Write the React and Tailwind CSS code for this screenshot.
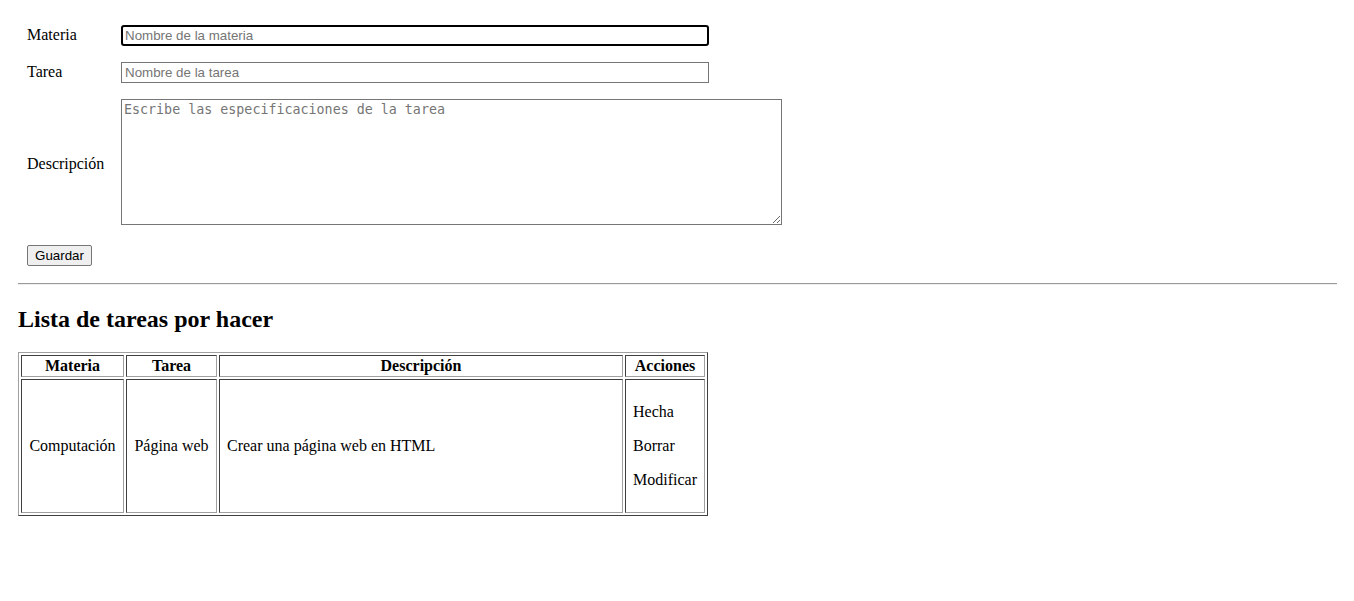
import React from "react";

export default function App() {
  const serif = "font-['Liberation_Serif','Times_New_Roman',serif]";
  const sans = "font-['Liberation_Sans',Arial,sans-serif]";
  return (
    <div className={`min-h-[601px] bg-white text-black ${serif} text-[16px] pl-[18px] pr-[17px]`}>
      <form className="flex flex-col gap-4 pt-[25px] pl-[9px]" onSubmit={(e) => e.preventDefault()}>
        <div className="flex items-center">
          <label className="w-[94px] leading-[18px] pb-[2px]">Materia</label>
          <input
            type="text"
            placeholder="Nombre de la materia"
            className={`w-[588px] h-[21px] border-2 border-black rounded-[3px] px-[2px] ${sans} text-[13.33px] placeholder:text-[#757575] outline-none`}
          />
        </div>
        <div className="flex items-center">
          <label className="w-[94px] leading-[18px] pb-[2px]">Tarea</label>
          <input
            type="text"
            placeholder="Nombre de la tarea"
            className={`w-[588px] h-[21px] border border-[#767676] px-[3px] ${sans} text-[13.33px] placeholder:text-[#757575] outline-none`}
          />
        </div>
        <div className="flex items-center">
          <label className="w-[94px] leading-[18px] pt-[4px]">Descripción</label>
          <textarea
            placeholder="Escribe las especificaciones de la tarea"
            className="w-[661px] h-[126px] border border-[#767676] px-[2px] py-[2px] font-['DejaVu_Sans_Mono',monospace] text-[13.33px] leading-[16px] placeholder:text-[#757575] outline-none resize"
          />
        </div>
        <div className="mt-[2px]">
          <button
            type="submit"
            className={`h-[21px] w-[65px] bg-[#efefef] border border-[#767676] rounded-[2px] ${sans} text-[13.33px] leading-[17px]`}
          >
            Guardar
          </button>
        </div>
      </form>

      <hr className="mt-[16px] border-0 border-t border-t-[#9a9a9a] border-b border-b-[#eeeeee] h-0" />

      <h2 className="mt-[21px] text-[24px] font-bold leading-[27px]">Lista de tareas por hacer</h2>

      <table className="mt-[19px] w-[690px] table-fixed border-separate border-spacing-[2px] border border-t-[#a0a0a0] border-l-[#a0a0a0] border-r-[#404040] border-b-[#404040]">
        <thead>
          <tr>
            {[
              ["Materia", "w-[103px]"],
              ["Tarea", "w-[91px]"],
              ["Descripción", "w-[404px]"],
              ["Acciones", "w-[80px]"],
            ].map(([t, w]) => (
              <th
                key={t}
                className={`${w} p-[1px] font-bold text-center leading-[18px] border border-t-[#404040] border-l-[#404040] border-r-[#a0a0a0] border-b-[#a0a0a0]`}
              >
                {t}
              </th>
            ))}
          </tr>
        </thead>
        <tbody>
          <tr>
            <td className="p-[7px] text-center align-middle leading-[18px] border border-t-[#404040] border-l-[#404040] border-r-[#a0a0a0] border-b-[#a0a0a0]">
              Computación
            </td>
            <td className="p-[7px] text-center align-middle leading-[18px] border border-t-[#404040] border-l-[#404040] border-r-[#a0a0a0] border-b-[#a0a0a0]">
              Página web
            </td>
            <td className="p-[7px] text-left align-middle leading-[18px] border border-t-[#404040] border-l-[#404040] border-r-[#a0a0a0] border-b-[#a0a0a0]">
              Crear una página web en HTML
            </td>
            <td className="p-[7px] text-left align-middle leading-[18px] border border-t-[#404040] border-l-[#404040] border-r-[#a0a0a0] border-b-[#a0a0a0]">
              <p className="my-4">Hecha</p>
              <p className="my-4">Borrar</p>
              <p className="my-4">Modificar</p>
            </td>
          </tr>
        </tbody>
      </table>
    </div>
  );
}
